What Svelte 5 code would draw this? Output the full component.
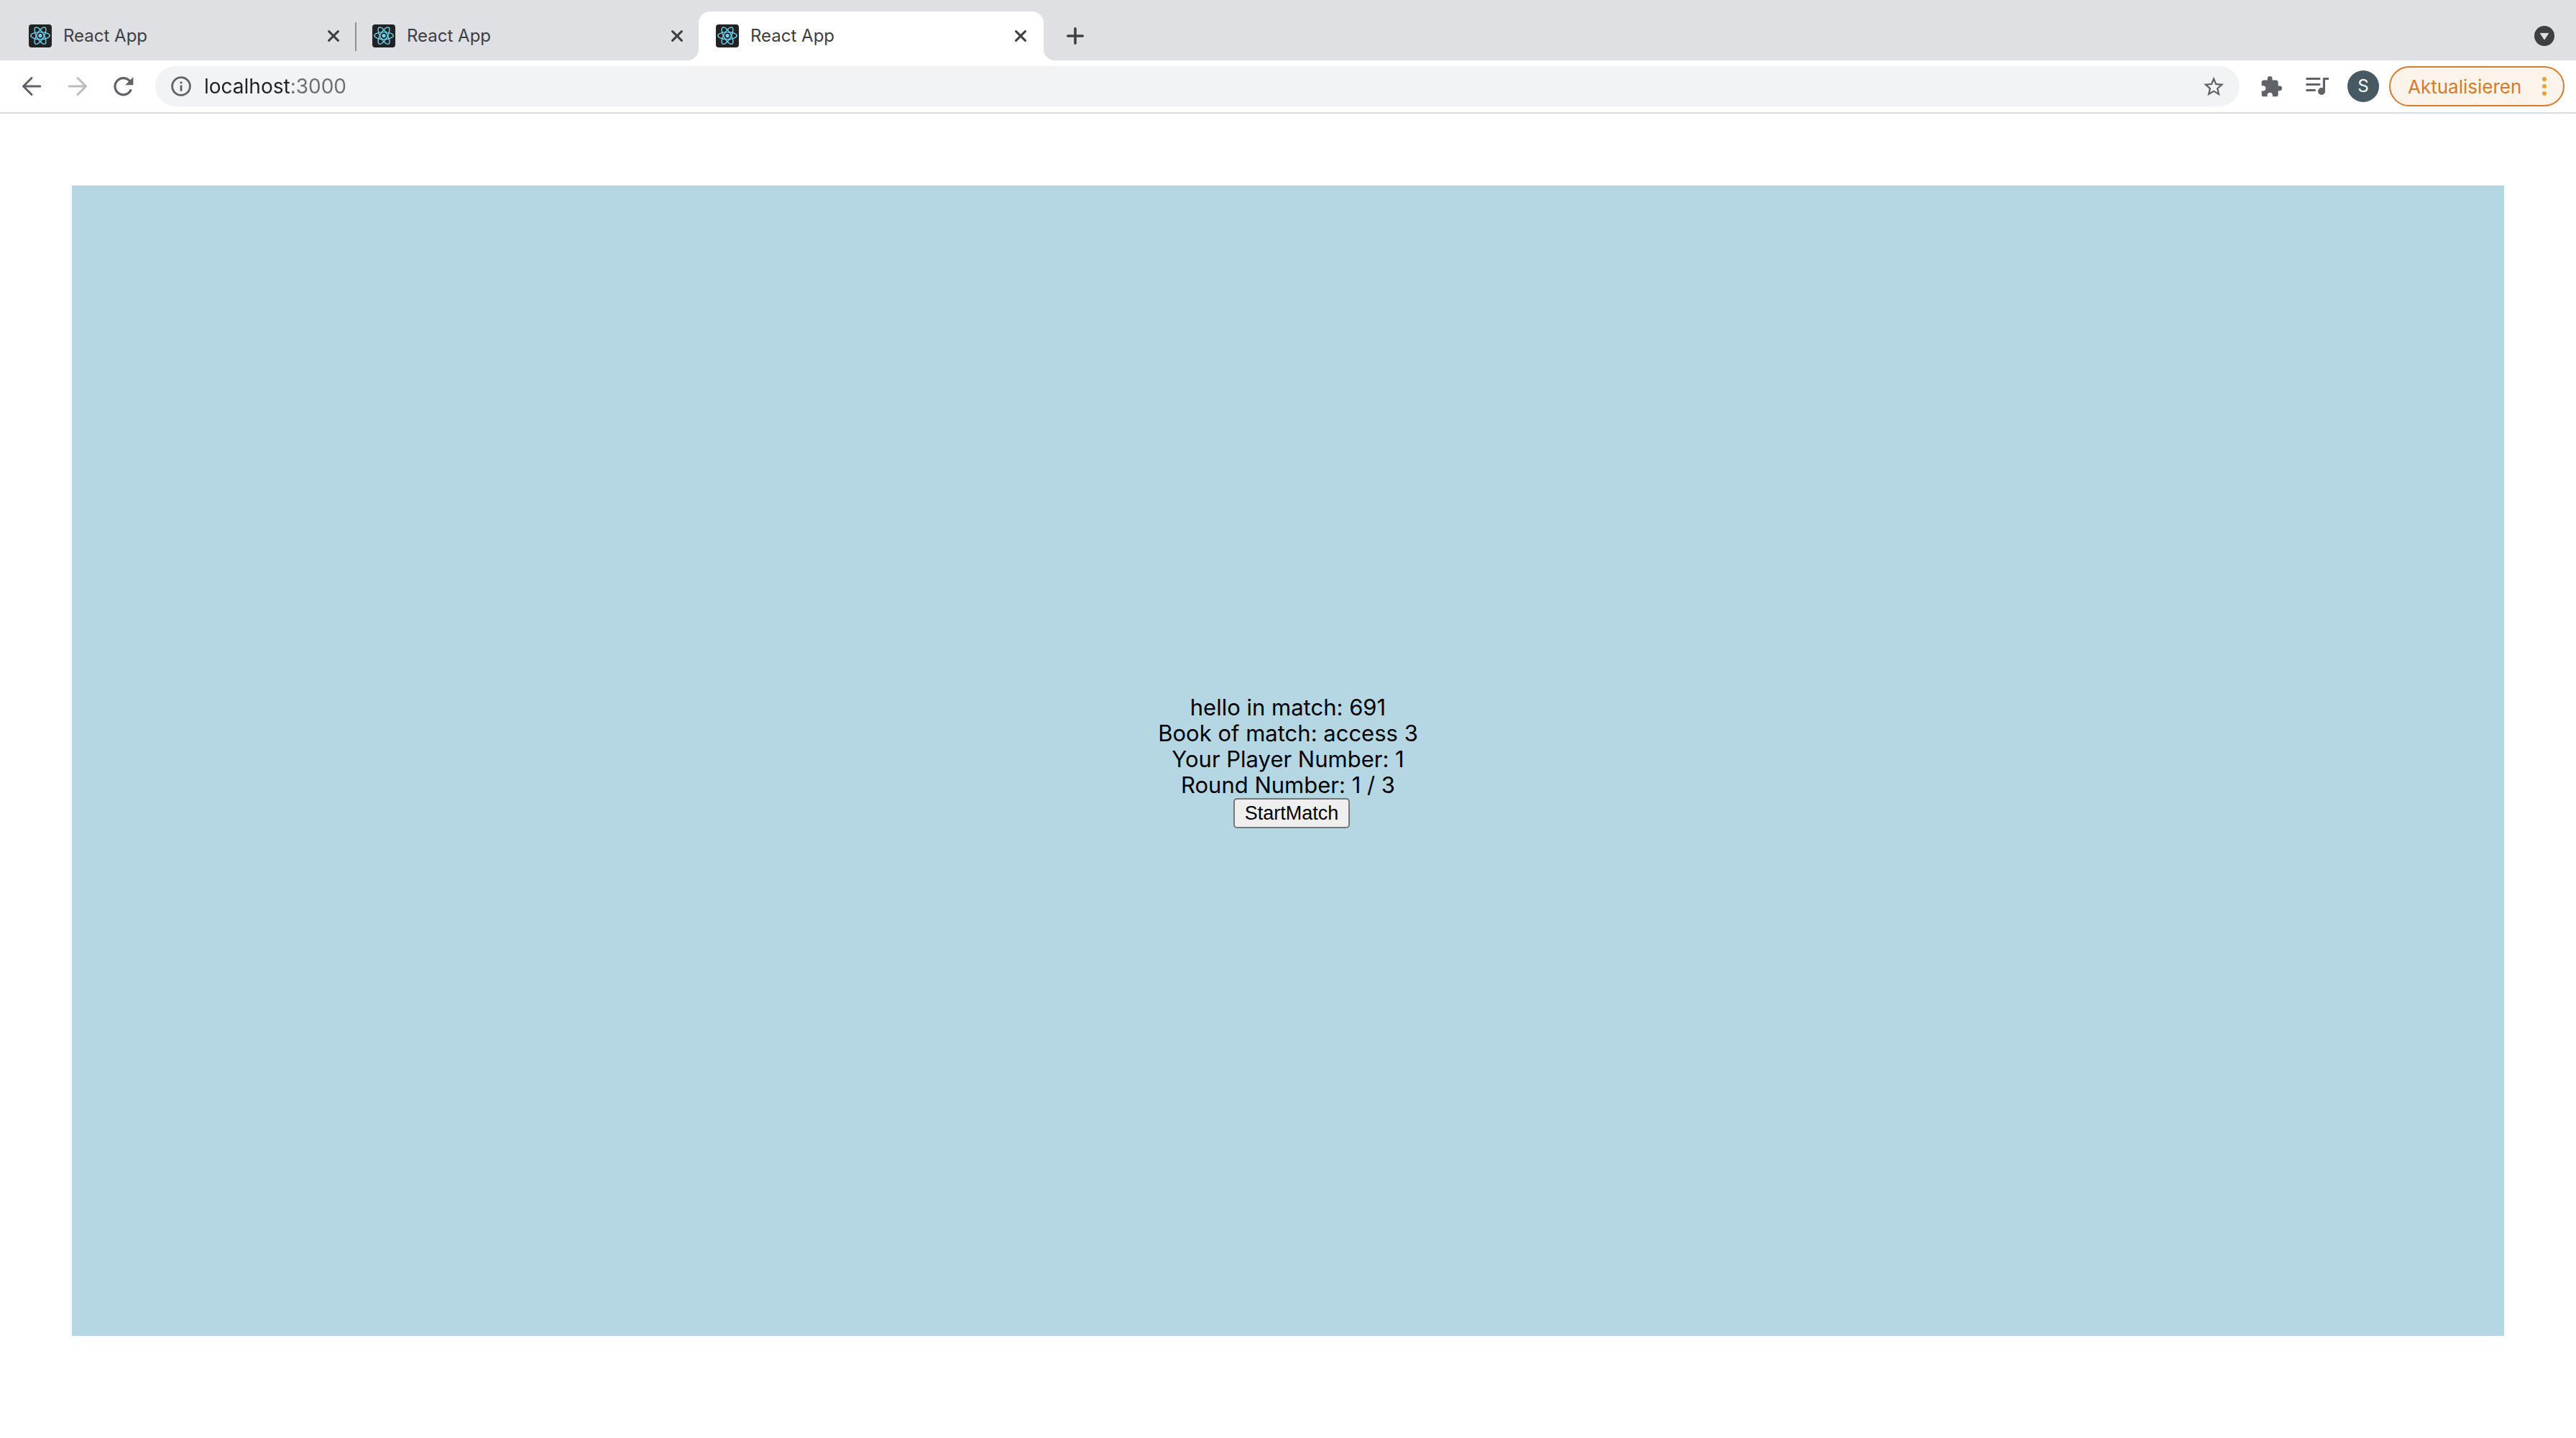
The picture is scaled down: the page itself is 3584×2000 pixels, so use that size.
<script>
  let tabs = $state([
    { id: 1, title: 'React App' },
    { id: 2, title: 'React App' },
    { id: 3, title: 'React App' }
  ]);
  let activeId = $state(3);
  let address = $state('localhost:3000');

  const match = {
    id: 691,
    book: 'access 3',
    player: 1,
    round: 1,
    rounds: 3
  };

  const orbits = [0, 60, 120];

  function closeTab(id) {
    tabs = tabs.filter((tab) => tab.id !== id);
  }
</script>

<div class="browser">
  <header>
    <div class="tab-strip">
      <div class="tabs">
        {#each tabs as tab, i (tab.id)}
          <div
            class="tab"
            class:active={tab.id === activeId}
            class:divided={tab.id !== activeId && tabs[i + 1]?.id !== activeId}
          >
            <button class="tab-select" type="button" onclick={() => (activeId = tab.id)}>
              <svg class="favicon" viewBox="0 0 32 32" aria-hidden="true">
                <rect width="32" height="32" rx="4" fill="#222" />
                <g fill="none" stroke="#71d3f3" stroke-width="1.4">
                  {#each orbits as angle}
                    <ellipse cx="16" cy="15.6" rx="13.2" ry="5" transform="rotate({angle} 16 15.6)" />
                  {/each}
                </g>
                <circle cx="16" cy="15.6" r="2.6" fill="#71d3f3" />
              </svg>
              <span>{tab.title}</span>
            </button>
            <button class="tab-close" type="button" aria-label="Tab schließen" onclick={() => closeTab(tab.id)}>
              <svg viewBox="0 0 16 16" aria-hidden="true">
                <path d="M1.6 1.6 14.4 14.4M14.4 1.6 1.6 14.4" />
              </svg>
            </button>
          </div>
        {/each}
      </div>
      <button class="new-tab" type="button" aria-label="Neuer Tab">
        <svg viewBox="0 0 24 24" aria-hidden="true"><path d="M12 1.8V22.2M1.8 12H22.2" /></svg>
      </button>
      <button class="tab-search" type="button" aria-label="Tabs durchsuchen">
        <svg viewBox="0 0 28 28" aria-hidden="true">
          <circle cx="14" cy="14" r="14" fill="#3c4043" />
          <path d="M8.4 10.4h11.2L14 19z" fill="#dfe0e4" stroke="#dfe0e4" stroke-linejoin="round" />
        </svg>
      </button>
    </div>

    <div class="toolbar">
      <nav aria-label="Navigation">
        <button type="button" aria-label="Zurück">
          <svg viewBox="0 0 28 28" fill="none" stroke="#5f6368" stroke-width="3" stroke-linecap="round" stroke-linejoin="round" aria-hidden="true">
            <path d="M14 2.5 2.5 14 14 25.5M2.5 14H25.8" />
          </svg>
        </button>
        <button type="button" aria-label="Vorwärts" disabled>
          <svg viewBox="0 0 28 28" fill="none" stroke="#babcbe" stroke-width="3" stroke-linecap="round" stroke-linejoin="round" aria-hidden="true">
            <path d="M14 2.5 25.5 14 14 25.5M25.5 14H2.2" />
          </svg>
        </button>
        <button type="button" aria-label="Neu laden">
          <svg viewBox="0 0 28 28" aria-hidden="true">
            <path d="M24.4 18.4A11.6 11.6 0 1 1 22.4 6.6" fill="none" stroke="#5f6368" stroke-width="3.2" />
            <path d="M27.4 1v11.2H16.2z" fill="#5f6368" />
          </svg>
        </button>
      </nav>

      <div class="omnibox">
        <button class="site-info" type="button" aria-label="Website-Informationen">
          <svg viewBox="0 0 28 28" aria-hidden="true">
            <circle cx="14" cy="14" r="12.4" fill="none" stroke="#5f6368" stroke-width="2.8" />
            <path d="M12.6 12.6h2.8v8.2h-2.8zM12.6 7.4h2.8v2.8h-2.8z" fill="#5f6368" />
          </svg>
        </button>
        <input type="text" aria-label="Adresse" bind:value={address} spellcheck="false" />
        <button class="bookmark" type="button" aria-label="Lesezeichen hinzufügen">
          <svg viewBox="2 1.5 20 20" aria-hidden="true">
            <path
              d="M22 9.24l-7.19-.62L12 2 9.19 8.63 2 9.24l5.46 4.73L5.82 21 12 17.27 18.18 21l-1.63-7.03L22 9.24zM12 15.4l-3.76 2.27 1-4.28-3.32-2.88 4.38-.38L12 6.1l1.71 4.04 4.38.38-3.32 2.88 1 4.28L12 15.4z"
              fill="#5f6368"
            />
          </svg>
        </button>
      </div>

      <div class="actions">
        <button class="extensions" type="button" aria-label="Erweiterungen">
          <svg viewBox="1.5 1 21.5 21.5" aria-hidden="true">
            <path
              d="M20.5 11H19V7c0-1.1-.9-2-2-2h-4V3.5a2.5 2.5 0 0 0-5 0V5H4c-1.1 0-2 .9-2 2v3.8h1.5a2.7 2.7 0 0 1 0 5.4H2V20c0 1.1.9 2 2 2h3.8v-1.5a2.7 2.7 0 0 1 5.4 0V22H17c1.1 0 2-.9 2-2v-4h1.5a2.5 2.5 0 0 0 0-5z"
              fill="#5f6368"
            />
          </svg>
        </button>
        <button class="media" type="button" aria-label="Mediensteuerung">
          <svg viewBox="0 0 32 28" aria-hidden="true">
            <path d="M1.5 3.5H19M1.5 11.5H19M1.5 19.5H12.5" fill="none" stroke="#5f6368" stroke-width="3" stroke-linecap="round" />
            <path d="M25.4 21V3.5H31" fill="none" stroke="#5f6368" stroke-width="3.2" stroke-linecap="round" stroke-linejoin="round" />
            <circle cx="22" cy="21" r="5" fill="#5f6368" />
          </svg>
        </button>
        <button class="avatar" type="button" aria-label="Profil S">S</button>
        <button class="update" type="button">
          <span>Aktualisieren</span>
          <svg viewBox="0 0 6 28" aria-hidden="true">
            <circle cx="3" cy="4" r="3" /><circle cx="3" cy="14" r="3" /><circle cx="3" cy="24" r="3" />
          </svg>
        </button>
      </div>
    </div>
  </header>

  <main>
    <div>hello in match: {match.id}</div>
    <div>Book of match: {match.book}</div>
    <div>Your Player Number: {match.player}</div>
    <div>Round Number: {match.round} / {match.rounds}</div>
    <button type="button">StartMatch</button>
  </main>
</div>

<style>
  :global(body) {
    margin: 0;
    background: #fff;
  }

  .browser {
    font-family: Inter, 'Liberation Sans', sans-serif;
  }

  button {
    flex: none;
    margin: 0;
    padding: 0;
    border: 0;
    background: none;
    color: inherit;
    font: inherit;
  }

  svg {
    display: block;
    flex: none;
  }

  .tab-strip {
    display: flex;
    align-items: center;
    height: 84px;
    box-sizing: border-box;
    padding: 16px 30px 0 16px;
    background: #dfe0e4;
  }

  .tabs {
    display: flex;
    height: 100%;
  }

  .tab {
    position: relative;
    display: flex;
    align-items: center;
    justify-content: space-between;
    box-sizing: border-box;
    width: 478px;
    padding: 0 22px 0 24px;
    color: #3c4043;
    font-size: 24px;
    line-height: 32px;
  }

  .tab.divided::after {
    content: '';
    position: absolute;
    top: 15px;
    right: -2px;
    width: 2px;
    height: 40px;
    background: #909195;
  }

  .tab.active {
    width: 480px;
    padding-right: 24px;
    border-radius: 16px 16px 0 0;
    background: #fff;
  }

  .tab.active::before,
  .tab.active::after {
    content: '';
    position: absolute;
    bottom: 0;
    width: 16px;
    height: 16px;
  }

  .tab.active::before {
    right: 100%;
    background: radial-gradient(circle at 0 0, transparent 16px, #fff 16px);
  }

  .tab.active::after {
    left: 100%;
    background: radial-gradient(circle at 100% 0, transparent 16px, #fff 16px);
  }

  .tab-select {
    display: flex;
    align-items: center;
    gap: 16px;
  }

  .favicon {
    width: 32px;
    height: 32px;
  }

  .tab-close svg {
    width: 16px;
    height: 16px;
    fill: none;
    stroke: #3c4043;
    stroke-width: 3;
    stroke-linecap: round;
  }

  .new-tab {
    margin: 0 auto 0 32px;
  }

  .new-tab svg {
    width: 24px;
    height: 24px;
    fill: none;
    stroke: #3c4043;
    stroke-width: 3.6;
    stroke-linecap: round;
  }

  .tab-search svg {
    width: 28px;
    height: 28px;
  }

  .toolbar {
    display: flex;
    align-items: center;
    padding: 8px 16px;
    border-bottom: 2px solid #dadbe2;
    background: #fff;
  }

  nav {
    display: flex;
    gap: 36px;
    padding: 0 30px 0 14px;
  }

  nav svg,
  .site-info svg,
  .bookmark svg {
    width: 28px;
    height: 28px;
  }

  .omnibox {
    display: flex;
    flex: 1;
    align-items: center;
    gap: 18px;
    height: 56px;
    box-sizing: border-box;
    padding: 0 22px;
    border-radius: 28px;
    background: #f1f3f5;
  }

  /* The host name is drawn darker than the port. */
  input {
    flex: 1;
    min-width: 0;
    height: 40px;
    margin: 0;
    padding: 0;
    border: 0;
    outline: 0;
    background: linear-gradient(to right, #202124 119px, #6b6e72 119px);
    background-clip: text;
    color: transparent;
    caret-color: #202124;
    font: inherit;
    font-size: 28px;
  }

  .actions {
    display: flex;
    align-items: center;
    padding-left: 30px;
  }

  .extensions svg {
    width: 29px;
    height: 29px;
  }

  .media {
    margin: 0 26px 0 33px;
  }

  .media svg {
    width: 32px;
    height: 28px;
  }

  .avatar {
    width: 44px;
    height: 44px;
    border-radius: 50%;
    background: #475962;
    color: #fff;
    font-size: 24px;
    line-height: 44px;
    text-align: center;
  }

  .update {
    display: flex;
    align-items: center;
    justify-content: space-between;
    box-sizing: border-box;
    width: 244px;
    height: 56px;
    margin-left: 14px;
    padding: 0 23px 0 24px;
    border: 2px solid #d67a2c;
    border-radius: 28px;
    background: #fcf4ea;
    color: #d67a2c;
    font-size: 26px;
  }

  .update svg {
    width: 6px;
    height: 28px;
    fill: #e9a13b;
  }

  main {
    display: flex;
    flex-direction: column;
    align-items: center;
    justify-content: center;
    box-sizing: border-box;
    min-height: 80vh;
    margin: 100px;
    padding-top: 2px;
    background: #b5d7e3;
    color: #000;
    font-size: 31px;
    line-height: 36px;
  }

  main button {
    margin-left: 10px;
    padding: 4px 14px;
    border: 2px solid #767676;
    border-radius: 5px;
    background: #efefef;
    font-family: 'Liberation Sans', sans-serif;
    font-size: 27px;
    line-height: 30px;
  }
</style>
